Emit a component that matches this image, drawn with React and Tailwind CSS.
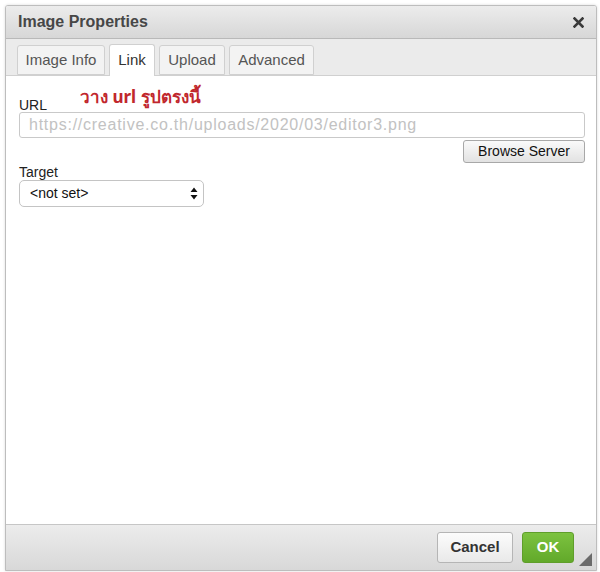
import React from 'react';

const tabs = [
  { label: 'Image Info', w: 'w-[88px]' },
  { label: 'Link', w: 'w-[46px]', active: true },
  { label: 'Upload', w: 'w-[66px]' },
  { label: 'Advanced', w: 'w-[85px]' },
];

const App = () => {
  return (
    <div className="w-[600px] h-[572px] bg-white pt-[5px] pl-[5px] font-['Liberation_Sans',Arial,sans-serif] text-[#222]">
      <div className="w-[592px] h-[566px] flex flex-col border border-[#bdbdbd] rounded-t-[3px] bg-white overflow-hidden shadow-[0_0_3px_rgba(0,0,0,0.15)]">
        {/* title bar */}
        <div className="h-[33px] shrink-0 flex items-center justify-between pl-[12px] pr-[12px] bg-gradient-to-b from-[#ececec] to-[#d7d7d7] border-b border-[#b9b9b9]">
          <span className="text-[16px] font-bold text-[#474747]">Image Properties</span>
          <svg width="11" height="11" viewBox="0 0 11 11" className="mt-[1px]">
            <path d="M1.5 1.5 L9.5 9.5 M9.5 1.5 L1.5 9.5" stroke="#3a3a3a" strokeWidth="2.6" strokeLinecap="square" />
          </svg>
        </div>

        {/* tabs */}
        <div className="h-[37px] shrink-0 flex items-end gap-[4px] pl-[11px] bg-[#ebebeb] border-b border-[#d0d0d0]">
          {tabs.map((t) => (
            <div
              key={t.label}
              className={
                t.active
                  ? `${t.w} h-[32px] -mb-px flex items-center justify-center bg-white border border-b-0 border-[#d0d0d0] rounded-t-[3px] text-[15px] text-[#333]`
                  : `${t.w} h-[30px] flex items-center justify-center bg-[#f3f3f3] border border-[#d0d0d0] rounded-t-[3px] text-[15px] text-[#555]`
              }
            >
              {t.label}
            </div>
          ))}
        </div>

        {/* content */}
        <div className="flex-1 pt-[11px] pl-[13px] pr-[11px]">
          <div className="flex items-end gap-[33px] h-[25px]">
            <span className="text-[14px] text-[#222] leading-[16px] mb-[-1px]">URL</span>
            <span className="text-[17px] font-bold text-[#c1272d] leading-[20px] mb-[5px] font-['Noto_Sans',sans-serif]">วาง url รูปตรงนี้</span>
          </div>
          <div className="h-[26px] w-[566px] border border-[#c9c9c9] rounded-[3px] flex items-center pl-[9px] text-[16px] text-[#c2c2c2] tracking-[0.75px]">
            https://creative.co.th/uploads/2020/03/editor3.png
          </div>
          <div className="flex justify-end mt-[2px]">
            <div className="w-[122px] h-[23px] flex items-center justify-center border border-[#a8a8a8] rounded-[3px] bg-gradient-to-b from-[#fafafa] to-[#e2e2e2] text-[14px] text-[#111]">
              Browse Server
            </div>
          </div>
          <div className="text-[14px] text-[#222] leading-[16px] mt-[1px]">Target</div>
          <div className="w-[185px] h-[27px] border border-[#c4c4c4] rounded-[5px] flex items-center justify-between pl-[10px] pr-[5px] text-[14px] text-[#111] bg-white">
            <span>&lt;not set&gt;</span>
            <svg width="8" height="13" viewBox="0 0 8 13">
              <path d="M4 0.5 L7.5 5 L0.5 5 Z M4 12.5 L7.5 8 L0.5 8 Z" fill="#111" />
            </svg>
          </div>
        </div>

        {/* footer */}
        <div className="relative h-[46px] shrink-0 flex items-center justify-end gap-[9px] pr-[22px] bg-gradient-to-b from-[#ececec] to-[#d8d8d8] border-t border-[#c6c6c6]">
          <div className="w-[76px] h-[31px] flex items-center justify-center border border-[#b5b5b5] rounded-[3px] bg-gradient-to-b from-[#fcfcfc] to-[#e9e9e9] text-[15px] font-bold text-[#333]">
            Cancel
          </div>
          <div className="w-[52px] h-[31px] flex items-center justify-center border border-[#5f9e2a] rounded-[3px] bg-gradient-to-b from-[#7cc23f] to-[#62a92a] text-[15px] font-bold text-white">
            OK
          </div>
          <svg width="13" height="13" viewBox="0 0 13 13" className="absolute right-[4px] bottom-[4px]">
            <path d="M13 0 L13 13 L0 13 Z" fill="#6b6b6b" />
          </svg>
        </div>
      </div>
    </div>
  );
};

export default App;
